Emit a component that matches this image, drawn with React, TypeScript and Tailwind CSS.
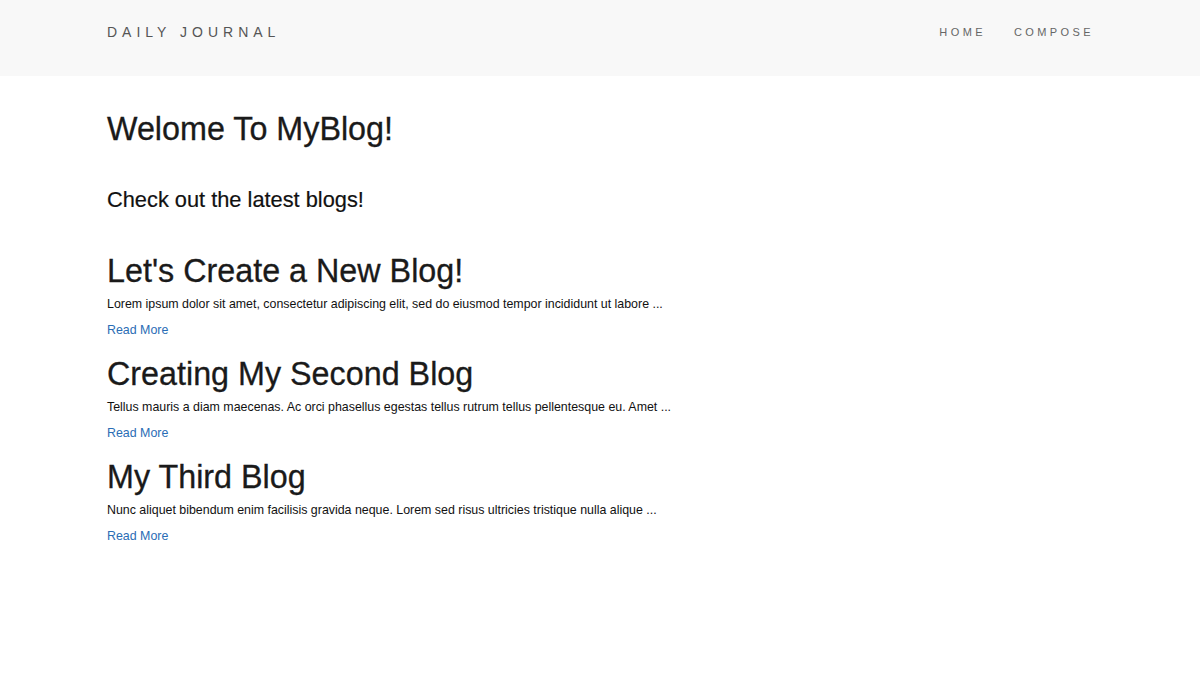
export default function App() {
  const posts = [
    {
      title: "Let's Create a New Blog!",
      body: 'Lorem ipsum dolor sit amet, consectetur adipiscing elit, sed do eiusmod tempor incididunt ut labore ...',
    },
    {
      title: 'Creating My Second Blog',
      body: 'Tellus mauris a diam maecenas. Ac orci phasellus egestas tellus rutrum tellus pellentesque eu. Amet ...',
    },
    {
      title: 'My Third Blog',
      body: 'Nunc aliquet bibendum enim facilisis gravida neque. Lorem sed risus ultricies tristique nulla alique ...',
    },
  ]

  return (
    <div className="min-h-[696px] bg-white font-['Liberation_Sans',Arial,sans-serif] text-[#222]">
      <nav className="h-[76px] bg-[#f8f8f8] px-[107px] flex items-center justify-between pb-[11px]">
        <a className="text-[14px] tracking-[5px] text-[#555]">DAILY JOURNAL</a>
        <ul className="flex items-center gap-[28px] text-[11px] tracking-[3.4px] text-[#666] -mr-[1px]">
          <li>HOME</li>
          <li>COMPOSE</li>
        </ul>
      </nav>

      <main className="px-[107px] pt-[33px]">
        <h1 className="text-[32.3px] leading-[40px] text-[#1a1a1a] [-webkit-text-stroke:0.3px_#1a1a1a]">Welome To MyBlog!</h1>
        <p className="mt-[38px] text-[21.8px] leading-[26px] text-[#111] [-webkit-text-stroke:0.2px_#111]">Check out the latest blogs!</p>

        <div className="mt-[38px] flex flex-col gap-[15px]">
          {posts.map((p) => (
            <article key={p.title}>
              <h2 className="text-[32.3px] leading-[40px] text-[#1a1a1a] [-webkit-text-stroke:0.3px_#1a1a1a]">{p.title}</h2>
              <p className="mt-[4px] text-[12.4px] leading-[18px] text-[#111]">{p.body}</p>
              <a className="block mt-[8px] text-[12.4px] leading-[18px] text-[#2a6db5]">Read More</a>
            </article>
          ))}
        </div>
      </main>
    </div>
  )
}
